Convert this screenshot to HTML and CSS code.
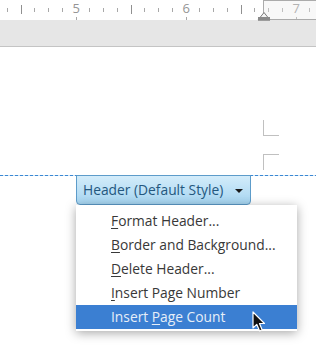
FILE: index.html
```html
<!DOCTYPE html>
<html>
<head>
<meta charset="utf-8">
<link rel="stylesheet" href="styles.css">
</head>
<body>
<div class="ruler">
  <div class="ticks">
    <span class="t"></span><span class="t half"></span><span class="t"></span><span class="t"></span><span class="t"></span>
    <span class="t num"><b>5</b></span>
    <span class="t"></span><span class="t"></span><span class="t"></span><span class="t half"></span><span class="t"></span><span class="t"></span><span class="t"></span>
    <span class="t num"><b>6</b></span>
    <span class="t"></span><span class="t"></span><span class="t"></span><span class="t half"></span><span class="t"></span><span class="t"></span><span class="t"></span>
    <span class="t num"><b>7</b></span>
    <span class="t"></span>
  </div>
  <div class="margin-box"></div>
  <svg class="indent" width="14" height="9" viewBox="0 0 14 9"><path d="M7 0.5 L13 8 L1 8 Z" fill="#f4f4f4" stroke="#7a7a7a" stroke-width="1"/><rect x="1" y="5" width="12" height="3.5" fill="#8a8a8a"/></svg>
</div>
<div class="band"></div>
<div class="page">
  <div class="corners">
    <div class="corner c1"></div>
    <div class="corner c2"></div>
  </div>
  <div class="header-line"></div>
  <div class="header-btn">Header (Default Style)<span class="caret"></span></div>
  <ul class="menu">
    <li><u>F</u>ormat Header...</li>
    <li><u>B</u>order and Background...</li>
    <li><u>D</u>elete Header...</li>
    <li><u>I</u>nsert Page Number</li>
    <li class="active">Insert <u>P</u>age Count</li>
  </ul>
  <svg class="cursor" width="14" height="22" viewBox="0 0 14 22"><path d="M1 1 L1 17 L4.8 13.4 L7.6 20 L10.2 18.9 L7.5 12.5 L12.5 12.5 Z" fill="#111" stroke="#fff" stroke-width="1.2" stroke-linejoin="round"/></svg>
</div>
</body>
</html>
```
FILE: styles.css
```css
* { box-sizing: border-box; }
html, body { margin: 0; padding: 0; background: #fff; }
body { width: 316px; height: 348px; overflow: hidden; font-family: "Open Sans", "Noto Sans", sans-serif; }

.ruler { position: relative; height: 20px; background: #fff; }
.ticks { display: flex; padding-left: 0.375px; height: 20px; }
.t { position: relative; flex: 0 0 13.75px; height: 20px; }
.t::before { content: ""; position: absolute; left: 6.5px; top: 8px; width: 1px; height: 4px; background: #a8a8a8; }
.t.half::before { top: 5px; height: 9px; background: #909090; }
.t.num::before { top: 17px; height: 3px; background: #a8a8a8; }
.t.num b { position: absolute; left: 2px; width: 10px; top: 0px; text-align: center; font-weight: normal; font-size: 13px; line-height: 16px; color: #959595; }
.margin-box { position: absolute; left: 263px; top: 0; width: 60px; height: 20px; border: 1px solid #ababab; background: rgba(235,235,235,0.35); }
.indent { position: absolute; left: 257px; top: 12px; }

.band { height: 27px; background: #e6e6e6; border-bottom: 1px solid #c4c4c4; box-shadow: 0 1px 1px rgba(0,0,0,0.08); }

.page { position: relative; height: 300px; background: #fff; }
.corners { padding: 73px 0 0 263px; }
.corner { width: 16px; height: 16px; border: 0 solid #c0c0c0; }
.c1 { border-left-width: 1px; border-bottom-width: 1px; }
.c2 { margin-top: 18px; border-left-width: 1px; border-top-width: 1px; }
.header-line { margin-top: 5px; height: 1px; background: repeating-linear-gradient(90deg, #3a88d4 0 3px, #cfe3f4 3px 5px); }

.header-btn { margin-left: 76px; width: 175px; height: 30px; margin-top: -1px; padding-left: 6px; border: 1px solid #5d9cca; border-radius: 0 0 4px 4px; background: linear-gradient(#d3ecfa, #a6d5f1); color: #23577e; font-size: 13.8px; line-height: 28px; white-space: nowrap; display: flex; align-items: center; }
.caret { margin-left: 12px; width: 0; height: 0; border-left: 4px solid transparent; border-right: 4px solid transparent; border-top: 4px solid #1a1a1a; margin-top: 2px; }

.menu { list-style: none; margin: 0 0 0 76px; padding: 4px 0 2px; width: 221px; background: #fff; box-shadow: 0 2px 10px rgba(0,0,0,0.35); }
.menu li { height: 24px; line-height: 24px; padding-left: 35px; font-size: 13.8px; color: #383838; white-space: nowrap; }
.menu u { text-decoration: underline; text-underline-offset: 2px; }
.menu li.active { background: #3b7fd2; color: #e6eef8; }

.cursor { position: absolute; left: 252px; top: 264px; }
```
